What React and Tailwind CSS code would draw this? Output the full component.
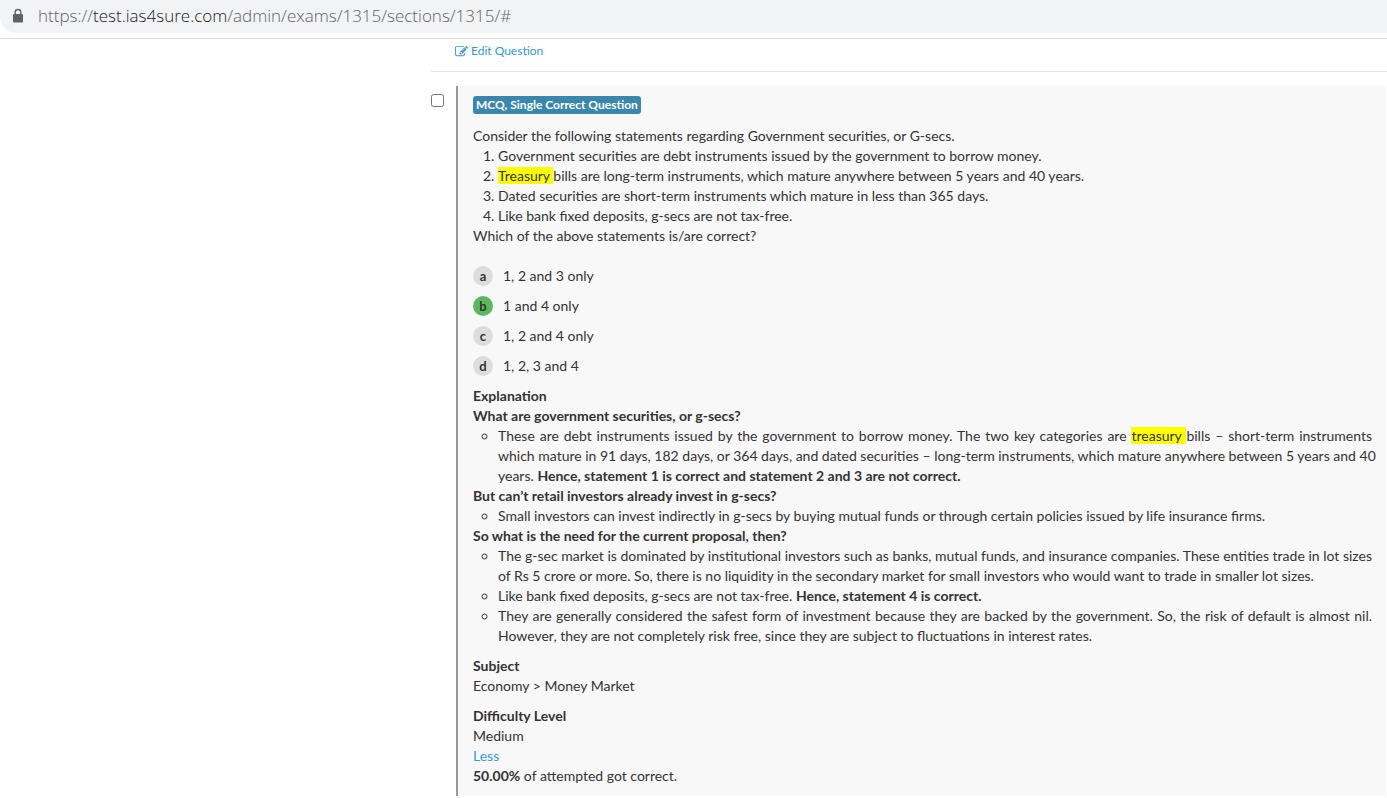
const statements = [
  <>Government securities are debt instruments issued by the government to borrow money.</>,
  <>
    <mark className="bg-[#ffff00] text-inherit">Treasury </mark>bills are long-term instruments, which mature anywhere between 5 years and 40 years.
  </>,
  <>Dated securities are short-term instruments which mature in less than 365 days.</>,
  <>Like bank fixed deposits, g-secs are not tax-free.</>,
];

const options = [
  { letter: "a", text: "1, 2 and 3 only" },
  { letter: "b", text: "1 and 4 only", correct: true },
  { letter: "c", text: "1, 2 and 4 only" },
  { letter: "d", text: "1, 2, 3 and 4" },
];

const explanation = [
  {
    title: "What are government securities, or g-secs?",
    points: [
      <>
        These are debt instruments issued by the government to borrow money. The two key categories are{" "}
        <mark className="bg-[#ffff00] text-inherit">treasury </mark>bills – short-term instruments{" "}
        <span className="lg:whitespace-nowrap">
          which mature in 91 days, 182 days, or 364 days, and dated securities – long-term instruments, which mature
          anywhere between 5 years and 40
        </span>{" "}
        years. <b>Hence, statement 1 is correct and statement 2 and 3 are not correct.</b>
      </>,
    ],
  },
  {
    title: "But can’t retail investors already invest in g-secs?",
    points: [
      <>
        Small investors can invest indirectly in g-secs by buying mutual funds or through certain policies issued by
        life insurance firms.
      </>,
    ],
  },
  {
    title: "So what is the need for the current proposal, then?",
    points: [
      <>
        The g-sec market is dominated by institutional investors such as banks, mutual funds, and insurance companies.
        These entities trade in lot sizes of Rs 5 crore or more. So, there is no liquidity in the secondary market for
        small investors who would want to trade in smaller lot sizes.
      </>,
      <>
        Like bank fixed deposits, g-secs are not tax-free. <b>Hence, statement 4 is correct.</b>
      </>,
      <>
        They are generally considered the safest form of investment because they are backed by the government. So, the
        risk of default is almost nil. However, they are not completely risk free, since they are subject to
        fluctuations in interest rates.
      </>,
    ],
  },
];

function EditIcon() {
  return (
    <svg viewBox="0 0 1792 1792" fill="currentColor" className="h-[13px] w-[13px]" aria-hidden="true">
      <path d="M888 1184l116-116-152-152-116 116v56h96v96h56zm440-720q-16-16-33 1l-350 350q-17 17-1 33t33-1l350-350q17-17 1-33zm80 594v190q0 119-84.5 203.5t-203.5 84.5h-832q-119 0-203.5-84.5t-84.5-203.5v-832q0-119 84.5-203.5t203.5-84.5h832q63 0 117 25 15 7 18 23 3 17-9 29l-49 49q-14 14-32 8-23-6-45-6h-832q-66 0-113 47t-47 113v832q0 66 47 113t113 47h832q66 0 113-47t47-113v-126q0-13 9-22l64-64q15-15 35-7t20 29zm-96-738l288 288-672 672h-288v-288zm444 132l-92 92-288-288 92-92q28-28 68-28t68 28l152 152q28 28 28 68t-28 68z" />
    </svg>
  );
}

function LockIcon() {
  return (
    <svg viewBox="0 0 16 16" className="h-4 w-4 shrink-0" aria-hidden="true">
      <rect x="3" y="6" width="10" height="8.5" rx="1" fill="currentColor" />
      <path d="M5.2 6.5V4.3a2.8 2.8 0 0 1 5.6 0v2.2" fill="none" stroke="currentColor" strokeWidth="1.4" />
    </svg>
  );
}

function AddressBar() {
  return (
    <header className="border-b border-[#dadada] pb-[5px]">
      <div className="flex h-[33px] items-center gap-3 rounded-bl-2xl bg-[#f1f3f4] pb-0.5 pl-2.5 font-['Open_Sans',sans-serif] text-[17px] font-light text-[#5f6368]">
        <LockIcon />
        <span>
          https://<span className="text-[#202124]">test.ias4sure.com</span>/admin/exams/1315/sections/1315/#
        </span>
      </div>
    </header>
  );
}

function Option({ letter, text, correct }) {
  return (
    <li className="flex h-5 items-center gap-2.5">
      <span
        className={
          "flex h-5 w-5 items-center justify-center rounded-full text-[13px] font-bold " +
          (correct ? "bg-[#5cb85c]" : "bg-[#dddddd]")
        }
      >
        {letter}
      </span>
      {text}
    </li>
  );
}

export default function App() {
  return (
    <div className="min-h-screen bg-white font-[Lato,sans-serif] text-sm leading-5 text-[#333333]">
      <AddressBar />
      <main className="ml-[431px] pr-px">
        <div className="-mr-px border-b border-[#e3e3e3] pt-0.5 pb-2.5 pl-6">
          <a href="#edit" className="flex w-fit items-center gap-[3px] text-xs leading-5 text-[#3498db]">
            <EditIcon />
            Edit Question
          </a>
        </div>
        <div className="flex items-stretch pt-3.5">
          <input type="checkbox" aria-label="Select question" className="mt-2 h-[13px] w-[13px] shrink-0" />
          <article className="ml-3 min-w-0 flex-1 border-l-2 border-[#999999] bg-[#f8f8f8] pt-2.5 pr-3.5 pb-2.5 pl-[15px]">
            <span className="flex h-[18px] w-fit items-center rounded-[3px] bg-[#3a87ad] px-[3px] text-xs font-bold text-white">
              MCQ, Single Correct Question
            </span>
            <p className="mt-3">Consider the following statements regarding Government securities, or G-secs.</p>
            <ol className="list-decimal pl-[25px]">
              {statements.map((s, i) => (
                <li key={i}>{s}</li>
              ))}
            </ol>
            <p>Which of the above statements is/are correct?</p>
            <ul className="mt-5 flex flex-col gap-2.5">
              {options.map((o) => (
                <Option key={o.letter} {...o} />
              ))}
            </ul>
            <h2 className="mt-2.5 font-bold">Explanation</h2>
            {explanation.map((part) => (
              <section key={part.title}>
                <h3 className="font-bold">{part.title}</h3>
                <ul className="list-[circle] pl-[25px] text-justify">
                  {part.points.map((p, i) => (
                    <li key={i}>{p}</li>
                  ))}
                </ul>
              </section>
            ))}
            <h2 className="mt-2.5 font-bold">Subject</h2>
            <p>Economy &gt; Money Market</p>
            <h2 className="mt-2.5 font-bold">Difficulty Level</h2>
            <p>Medium</p>
            <a href="#less" className="text-[#3498db]">Less</a>
            <p>
              <b>50.00%</b> of attempted got correct.
            </p>
          </article>
        </div>
      </main>
    </div>
  );
}
